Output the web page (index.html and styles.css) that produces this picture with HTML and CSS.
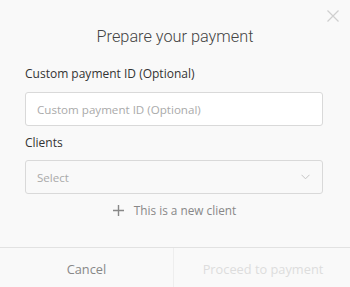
FILE: index.html
```html
<!DOCTYPE html>
<html>
<head>
<meta charset="utf-8">
<link rel="stylesheet" href="styles.css">
</head>
<body>
<div class="modal">
  <button class="close" aria-label="Close">
    <svg width="12" height="12" viewBox="0 0 12 12"><path d="M0.5 0.5 L11.5 11.5 M11.5 0.5 L0.5 11.5" stroke="#cfcfcf" stroke-width="1.2" fill="none"/></svg>
  </button>
  <div class="content">
    <h1 class="title">Prepare your payment</h1>
    <label class="label">Custom payment ID (Optional)</label>
    <div class="input">Custom payment ID (Optional)</div>
    <label class="label label-clients">Clients</label>
    <div class="select">
      <span>Select</span>
      <svg width="9" height="6" viewBox="0 0 9 6"><path d="M0.5 0.8 L4.5 4.8 L8.5 0.8" stroke="#c4c4c4" stroke-width="1" fill="none"/></svg>
    </div>
    <div class="new-client">
      <svg width="11" height="11" viewBox="0 0 11 11"><path d="M5.5 0 V11 M0 5.5 H11" stroke="#888" stroke-width="1.4" fill="none"/></svg>
      <span>This is a new client</span>
    </div>
  </div>
  <div class="footer">
    <div class="btn cancel">Cancel</div>
    <div class="btn proceed">Proceed to payment</div>
  </div>
</div>
</body>
</html>
```
FILE: styles.css
```css
* { box-sizing: border-box; }
html, body { margin: 0; padding: 0; }
body {
  background: #f9f9f9;
  font-family: "Open Sans", "Noto Sans", sans-serif;
  width: 350px;
  height: 287px;
  overflow: hidden;
}
.modal {
  position: relative;
  width: 350px;
  height: 287px;
  display: flex;
  flex-direction: column;
}
.close {
  position: absolute;
  top: 10px;
  right: 11px;
  width: 12px;
  height: 12px;
  padding: 0;
  border: 0;
  background: none;
  display: flex;
}
.content {
  flex: 1;
  padding: 26px 27px 0 25px;
  display: flex;
  flex-direction: column;
}
.title {
  margin: 0 0 18px;
  font-family: Roboto, "Noto Sans", sans-serif;
  font-weight: 300;
  font-size: 16.3px;
  line-height: 22px;
  color: #444;
  text-align: center;
  padding-left: 2px;
}
.label {
  display: block;
  font-size: 12px;
  font-weight: 500;
  line-height: 16px;
  color: #333;
  margin-bottom: 10px;
}
.label-clients {
  margin-top: 9px;
  margin-bottom: 9px;
}
.input, .select {
  height: 34px;
  border: 1px solid #d9d9d9;
  border-radius: 3px;
  padding: 0 11px;
  font-size: 11.6px;
  color: #aaa;
  display: flex;
  align-items: center;
}
.input { background: #fff; }
.select {
  background: #f9f9f9;
  justify-content: space-between;
  padding-right: 12px;
}
.new-client {
  margin-top: 8px;
  display: flex;
  align-items: center;
  justify-content: center;
  gap: 10px;
  font-size: 11.8px;
  line-height: 16px;
  color: #888;
  padding-left: 1px;
}
.footer {
  height: 40px;
  border-top: 1px solid #e2e2e2;
  display: flex;
}
.btn {
  flex: 1 1 0;
  display: flex;
  align-items: center;
  justify-content: center;
  font-size: 12.8px;
  padding-top: 3px;
}
.cancel {
  color: #888;
  flex: 0 0 173px;
}
.proceed {
  color: #ddd;
  border-left: 1px solid #eee;
  padding-left: 2px;
}
```
